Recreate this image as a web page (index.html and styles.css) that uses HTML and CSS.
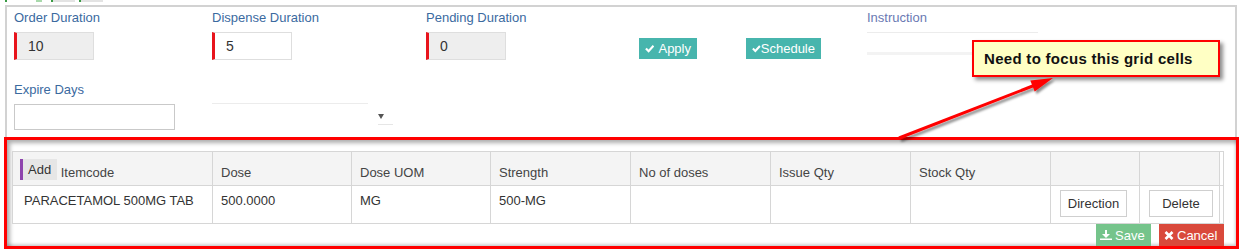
FILE: index.html
```html
<!DOCTYPE html>
<html lang="en">

<head>
    <meta charset="UTF-8">
    <meta name="viewport" content="width=device-width, initial-scale=1.0">
    <title>Prescription Grid</title>
    <link rel="stylesheet" href="styles.css">
</head>

<body>
    <div class="tabs-edge">
        <span class="edge edge-green" style="margin-left:5px;width:2px"></span>
        <span class="edge edge-light" style="margin-left:29px;width:6px"></span>
        <span class="edge edge-green" style="margin-left:9px;width:2px"></span>
        <span class="edge edge-gray" style="width:22px"></span>
        <span class="edge edge-green" style="margin-left:4px;width:2px"></span>
        <span class="edge edge-gray" style="width:22px"></span>
    </div>

    <div class="panel">
        <div class="form-row">
            <div class="field col-1">
                <label class="label" for="orderDuration">Order Duration</label>
                <input type="text" id="orderDuration" class="input readonly" value="10" readonly />
            </div>
            <div class="field col-2">
                <label class="label" for="dispenseDuration">Dispense Duration</label>
                <input type="text" id="dispenseDuration" class="input" value="5" />
            </div>
            <div class="field col-3">
                <label class="label" for="pendingDuration">Pending Duration</label>
                <input type="text" id="pendingDuration" class="input readonly" value="0" readonly />
            </div>
            <div class="field col-4">
                <button class="btn-teal btn-apply">
                    <svg class="check" width="10" height="9" viewBox="0 0 10 9"><path d="M1 4.6 L3.8 7.4 L9 1.6" /></svg>
                    Apply
                </button>
            </div>
            <div class="field col-5">
                <button class="btn-teal btn-schedule">
                    <svg class="check" width="10" height="9" viewBox="0 0 10 9"><path d="M1 4.6 L3.8 7.4 L9 1.6" /></svg>Schedule
                </button>
            </div>
            <div class="field col-6">
                <label class="label label-light">Instruction</label>
                <div class="instr-box"></div>
            </div>
        </div>

        <div class="form-row">
            <div class="field col-1">
                <label class="label" for="expireDays">Expire Days</label>
                <input type="text" id="expireDays" class="input wide" />
            </div>
            <div class="field col-2">
                <div class="select">
                    <span class="select-line"></span>
                    <span class="select-caret"><span class="caret-tri"></span></span>
                </div>
            </div>
        </div>
    </div>

    <div class="grid-box">
        <table class="grid">
            <colgroup>
                <col style="width:200px">
                <col style="width:139px">
                <col style="width:139px">
                <col style="width:140px">
                <col style="width:140px">
                <col style="width:140px">
                <col style="width:140px">
                <col style="width:89px">
                <col style="width:80px">
                <col style="width:4px">
            </colgroup>
            <tr>
                <th class="first"><button class="btn-add">Add</button> Itemcode</th>
                <th>Dose</th>
                <th>Dose UOM</th>
                <th>Strength</th>
                <th>No of doses</th>
                <th>Issue Qty</th>
                <th>Stock Qty</th>
                <th></th>
                <th></th>
                <th class="edge-col"></th>
            </tr>
            <tr>
                <td class="first">PARACETAMOL 500MG TAB</td>
                <td>500.0000</td>
                <td>MG</td>
                <td>500-MG</td>
                <td></td>
                <td></td>
                <td></td>
                <td class="action"><button class="btn-row btn-direction">Direction</button></td>
                <td class="action"><button class="btn-row btn-delete">Delete</button></td>
                <td class="edge-col"></td>
            </tr>
        </table>

        <div class="grid-actions">
            <button class="btn-save">
                <svg width="12" height="10" viewBox="0 0 12 10"><rect x="5" y="0" width="2" height="4" /><polygon points="2,4 10,4 6,8" /><rect x="0" y="8.5" width="12" height="1.5" /></svg>
                Save
            </button>
            <button class="btn-cancel">
                <svg width="10" height="9" viewBox="0 0 10 9"><path d="M1.5 1 L8.5 8 M8.5 1 L1.5 8" /></svg>
                Cancel
            </button>
        </div>
    </div>

    <!-- annotation drawn over the screen -->
    <div class="callout">Need to focus this grid cells</div>
    <svg class="arrow" width="1241" height="251" viewBox="0 0 1241 251">
        <defs>
            <filter id="shade" x="-10%" y="-10%" width="130%" height="140%">
                <feDropShadow dx="2" dy="2.5" stdDeviation="1.3" flood-color="#000" flood-opacity="0.45" />
            </filter>
        </defs>
        <g filter="url(#shade)">
            <line x1="899" y1="138" x2="1034" y2="85.5" stroke="#f00" stroke-width="3" />
            <polygon points="1053,78 1030.3,80.4 1034.7,91.6" fill="#f00" />
        </g>
    </svg>
</body>

</html>
```

FILE: styles.css
```css
* {
    box-sizing: border-box;
}

body {
    margin: 0;
    width: 1241px;
    height: 251px;
    overflow: hidden;
    position: relative;
    background: #fff;
    color: #333;
    font-family: "Liberation Sans", Arial, sans-serif;
    font-size: 13px;
}

.tabs-edge {
    display: flex;
    align-items: flex-start;
    height: 5px;
}

.edge {
    display: block;
    height: 2px;
}

.edge-green {
    background: #3a9b45;
}

.edge-light {
    background: #a8d9ab;
}

.edge-gray {
    background: #e3e3e3;
}

.panel {
    margin-left: 5px;
    width: 1232px;
    border: 2px solid #d2d2d2;
    border-bottom: 0;
    padding: 2px 0 7px 7px;
}

.form-row {
    display: flex;
}

.form-row + .form-row {
    margin-top: 21px;
}

.col-1 { width: 198px; }
.col-2 { width: 214px; }
.col-3 { width: 213px; }
.col-4 { width: 107px; }
.col-5 { width: 121px; }
.col-6 { flex: 1; }

.label {
    display: block;
    line-height: 18px;
    margin-bottom: 5px;
    color: #3b6a9f;
}

.label-light {
    color: #6a79b3;
}

.input {
    display: block;
    width: 80px;
    height: 28px;
    margin: 0;
    padding: 0 0 0 11px;
    border: 1px solid #dedede;
    border-left: 3px solid #e8141c;
    border-radius: 0;
    background: #fff;
    color: #333;
    font-family: "Liberation Sans", Arial, sans-serif;
    font-size: 14px;
    outline: none;
}

.input.readonly {
    background: #eeeeee;
}

.input.wide {
    width: 161px;
    height: 26px;
    margin-top: 1px;
    border-left: 1px solid #c9c9c9;
    border-color: #c9c9c9;
}

.btn-teal {
    display: flex;
    align-items: center;
    margin-top: 29px;
    height: 21px;
    border: 0;
    background: #47b5ad;
    color: #fff;
    font-family: "Liberation Sans", Arial, sans-serif;
    font-size: 13px;
    padding: 0 6px;
}

.btn-apply {
    width: 58px;
}

.btn-apply .check {
    margin-right: 4px;
}

.btn-schedule {
    width: 75px;
    padding-left: 6px;
}

.check path {
    fill: none;
    stroke: #fff;
    stroke-width: 2.3;
}

.instr-box {
    width: 171px;
    height: 23px;
    border-top: 1px solid #ececec;
    border-bottom: 3px solid #f3f3f3;
}

.select {
    display: flex;
    margin-top: 22px;
}

.select-line {
    display: block;
    width: 156px;
    height: 22px;
    border-top: 1px solid #ececec;
}

.select-caret {
    display: block;
    width: 15px;
    height: 22px;
    margin-left: 10px;
    border-bottom: 1px solid #e6e6e6;
}

.caret-tri {
    display: block;
    width: 0;
    height: 0;
    margin-top: 11px;
    border-left: 3.5px solid transparent;
    border-right: 3.5px solid transparent;
    border-top: 5px solid #555;
}

.grid-box {
    margin-left: 4px;
    width: 1235px;
    height: 112px;
    border: 3px solid #f00;
    box-shadow: inset 3px 3px 4px rgba(0, 0, 0, 0.32), inset -1px -2px 3px rgba(0, 0, 0, 0.18);
    padding: 11px 0 0 5px;
}

.grid {
    width: 1211px;
    border-collapse: collapse;
    table-layout: fixed;
}

.grid th,
.grid td {
    border: 1px solid #d6d6d6;
    padding: 0 8px;
    text-align: left;
    font-weight: normal;
    line-height: 18px;
    white-space: nowrap;
}

.grid th {
    height: 34px;
    background: #f4f4f4;
    color: #444;
    vertical-align: bottom;
    padding-bottom: 3px;
}

.grid td {
    height: 38px;
    background: #fff;
    vertical-align: top;
    padding-top: 6px;
}

.grid th.first {
    padding-left: 7px;
}

.grid td.first {
    padding-left: 11px;
}

.grid .edge-col {
    padding: 0;
    background: #fff;
}

.grid td.action {
    padding: 4px 0 0 9px;
}

.btn-add {
    display: inline-block;
    vertical-align: text-bottom;
    height: 21px;
    margin: 0;
    padding: 0 6px 0 5px;
    border: 0;
    border-left: 3px solid #8e44ad;
    background: #e6e6e6;
    color: #333;
    font-family: "Liberation Sans", Arial, sans-serif;
    font-size: 13px;
    line-height: 19px;
}

.btn-row {
    display: block;
    height: 27px;
    padding: 0;
    border: 1px solid #cfcfcf;
    background: #fff;
    color: #333;
    font-family: "Liberation Sans", Arial, sans-serif;
    font-size: 13px;
}

.btn-direction {
    width: 67px;
}

.btn-delete {
    width: 64px;
}

.grid-actions {
    display: flex;
    justify-content: flex-end;
    gap: 8px;
    width: 1212px;
}

.btn-save,
.btn-cancel {
    display: flex;
    align-items: center;
    gap: 3px;
    height: 22px;
    border: 0;
    color: #fff;
    font-family: "Liberation Sans", Arial, sans-serif;
    font-size: 13px;
}

.btn-save {
    width: 55px;
    padding: 0 0 0 4px;
    background: #75c48b;
}

.btn-save svg {
    fill: #fff;
}

.btn-cancel {
    width: 65px;
    padding: 0 0 0 5px;
    background: #d9493b;
}

.btn-cancel path {
    stroke: #fff;
    stroke-width: 2.6;
}

.callout {
    position: absolute;
    left: 972px;
    top: 40px;
    width: 248px;
    height: 37px;
    padding-left: 10px;
    border: 2px solid #f00;
    background: #ffffc4;
    box-shadow: 3px 3px 4px rgba(0, 0, 0, 0.45);
    color: #111;
    font-size: 15px;
    font-weight: bold;
    letter-spacing: 0.3px;
    line-height: 33px;
}

.arrow {
    position: absolute;
    left: 0;
    top: 0;
    pointer-events: none;
}
```
